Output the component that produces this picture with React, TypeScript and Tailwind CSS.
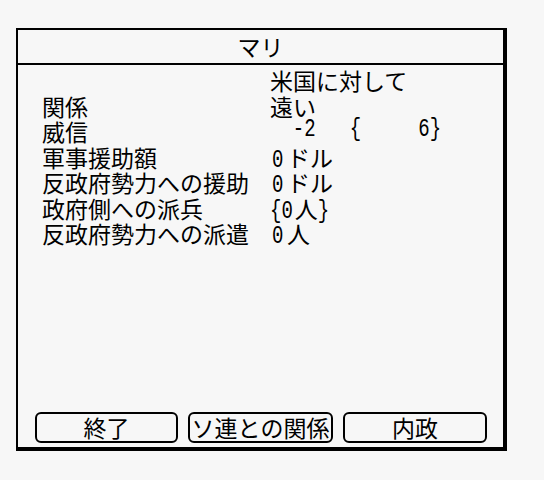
import React from "react";

const jp = { fontFamily: '"Noto Sans CJK JP", "Noto Sans", sans-serif' };

function Row({ label, children }: { label: string; children?: React.ReactNode }) {
  return (
    <div className="flex h-[25.5px] leading-[25.5px] whitespace-nowrap">
      <div className="w-[252px] pl-[24px] shrink-0">{label}</div>
      <div className="flex items-baseline">{children}</div>
    </div>
  );
}

const mono =
  "font-['Liberation_Mono',monospace] text-[19px] whitespace-pre inline-block scale-y-[1.35] origin-[50%_70%]";

export default function App() {
  return (
    <div className="w-[544px] h-[480px] bg-[#f7f7f7] pt-[28px] pl-[16px] text-black" style={jp}>
      <div className="w-[491px] h-[423px] border-t-2 border-l-2 border-r-4 border-b-4 border-black flex flex-col text-[23px]">
        <div className="h-[35px] border-b-2 border-black flex items-center justify-center leading-none">
          マリ
        </div>
        <div className="flex-1 flex flex-col pt-[3px]">
          <Row label="">米国に対して</Row>
          <Row label="関係">遠い</Row>
          <Row label="威信">
            <span className={mono}>{"  -2   {     6}"}</span>
          </Row>
          <Row label="軍事援助額">
            <span className={`${mono} w-[17px] pl-[2px]`}>0</span>
            <span>ドル</span>
          </Row>
          <Row label="反政府勢力への援助">
            <span className={`${mono} w-[17px] pl-[2px]`}>0</span>
            <span>ドル</span>
          </Row>
          <Row label="政府側への派兵">
            <span className={mono}>{"{0"}</span>
            <span className="pl-[2px]">人</span>
            <span className={mono}>{"}"}</span>
          </Row>
          <Row label="反政府勢力への派遣">
            <span className={`${mono} w-[17px] pl-[2px]`}>0</span>
            <span>人</span>
          </Row>
          <div className="mt-auto flex gap-[10px] pl-[17px] pb-[4px]">
            <button className="w-[143px] h-[31px] border-2 border-black rounded-[6px] flex items-center justify-center leading-none">
              終了
            </button>
            <button className="w-[145px] h-[31px] border-2 border-black rounded-[6px] flex items-center justify-center leading-none whitespace-nowrap">
              ソ連との関係
            </button>
            <button className="w-[144px] h-[31px] border-2 border-black rounded-[6px] flex items-center justify-center leading-none">
              内政
            </button>
          </div>
        </div>
      </div>
    </div>
  );
}
